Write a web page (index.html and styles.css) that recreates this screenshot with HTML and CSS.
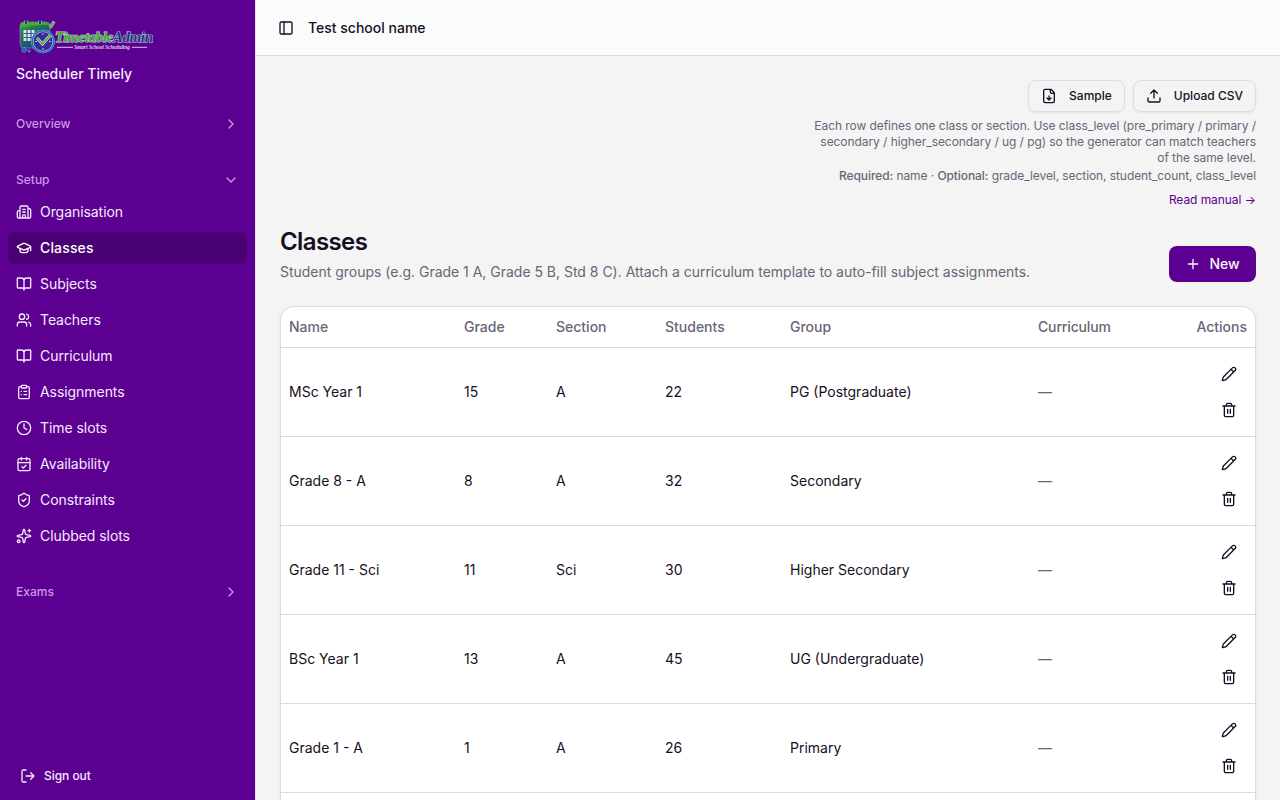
FILE: index.html
```html
<!DOCTYPE html>
<html lang="en">
  <head>
    <meta charset="UTF-8" />
    <title>Classes</title>
    <link rel="stylesheet" href="styles.css">
  </head>
  <body>
    <svg class="sprite">
      <symbol id="chevron-right" viewBox="0 0 24 24"><path d="m9 18 6-6-6-6" /></symbol>
      <symbol id="chevron-down" viewBox="0 0 24 24"><path d="m6 9 6 6 6-6" /></symbol>
      <symbol id="building" viewBox="0 0 24 24">
        <path d="M10 12h4M10 8h4M14 21v-3a2 2 0 0 0-4 0v3M6 10H4a2 2 0 0 0-2 2v7a2 2 0 0 0 2 2h16a2 2 0 0 0 2-2V9a2 2 0 0 0-2-2h-2M6 21V5a2 2 0 0 1 2-2h8a2 2 0 0 1 2 2v16" />
      </symbol>
      <symbol id="cap" viewBox="0 0 24 24">
        <path d="M21.42 10.922a1 1 0 0 0-.019-1.838L12.83 5.18a2 2 0 0 0-1.66 0L2.6 9.08a1 1 0 0 0 0 1.832l8.57 3.908a2 2 0 0 0 1.66 0zM22 10v6M6 12.5V16a6 3 0 0 0 12 0v-3.5" />
      </symbol>
      <symbol id="book" viewBox="0 0 24 24">
        <path d="M12 7v14M3 18a1 1 0 0 1-1-1V4a1 1 0 0 1 1-1h5a4 4 0 0 1 4 4 4 4 0 0 1 4-4h5a1 1 0 0 1 1 1v13a1 1 0 0 1-1 1h-6a3 3 0 0 0-3 3 3 3 0 0 0-3-3z" />
      </symbol>
      <symbol id="users" viewBox="0 0 24 24">
        <path d="M16 21v-2a4 4 0 0 0-4-4H6a4 4 0 0 0-4 4v2M16 3.128a4 4 0 0 1 0 7.744M22 21v-2a4 4 0 0 0-3-3.87" /><circle cx="9" cy="7" r="4" />
      </symbol>
      <symbol id="clipboard" viewBox="0 0 24 24">
        <rect width="8" height="4" x="8" y="2" rx="1" />
        <path d="M16 4h2a2 2 0 0 1 2 2v14a2 2 0 0 1-2 2H6a2 2 0 0 1-2-2V6a2 2 0 0 1 2-2h2M12 11h4M12 16h4M8 11h.01M8 16h.01" />
      </symbol>
      <symbol id="clock" viewBox="0 0 24 24"><circle cx="12" cy="12" r="10" /><path d="M12 6v6l4 2" /></symbol>
      <symbol id="calendar" viewBox="0 0 24 24">
        <rect width="18" height="18" x="3" y="4" rx="2" /><path d="M8 2v4M16 2v4M3 10h18M9 16l2 2 4-4" />
      </symbol>
      <symbol id="shield" viewBox="0 0 24 24">
        <path d="M20 13c0 5-3.5 7.5-7.66 8.95a1 1 0 0 1-.67-.01C7.5 20.5 4 18 4 13V6a1 1 0 0 1 1-1c2 0 4.5-1.2 6.24-2.72a1.17 1.17 0 0 1 1.52 0C14.51 3.81 17 5 19 5a1 1 0 0 1 1 1zM9 12l2 2 4-4" />
      </symbol>
      <symbol id="sparkles" viewBox="0 0 24 24">
        <path d="M11.017 2.814a1 1 0 0 1 1.966 0l1.051 5.558a2 2 0 0 0 1.594 1.594l5.558 1.051a1 1 0 0 1 0 1.966l-5.558 1.051a2 2 0 0 0-1.594 1.594l-1.051 5.558a1 1 0 0 1-1.966 0l-1.051-5.558a2 2 0 0 0-1.594-1.594l-5.558-1.051a1 1 0 0 1 0-1.966l5.558-1.051a2 2 0 0 0 1.594-1.594zM20 2v4M22 4h-4" /><circle cx="4" cy="20" r="2" />
      </symbol>
      <symbol id="logout" viewBox="0 0 24 24">
        <path d="m16 17 5-5-5-5M21 12H9M9 21H5a2 2 0 0 1-2-2V5a2 2 0 0 1 2-2h4" />
      </symbol>
      <symbol id="panel" viewBox="0 0 24 24"><rect width="18" height="18" x="3" y="3" rx="2" /><path d="M9 3v18" /></symbol>
      <symbol id="file-down" viewBox="0 0 24 24">
        <path d="M15 2H6a2 2 0 0 0-2 2v16a2 2 0 0 0 2 2h12a2 2 0 0 0 2-2V7zM14 2v4a2 2 0 0 0 2 2h4M12 18v-6M9 15l3 3 3-3" />
      </symbol>
      <symbol id="upload" viewBox="0 0 24 24">
        <path d="M12 3v12M17 8l-5-5-5 5M21 15v4a2 2 0 0 1-2 2H5a2 2 0 0 1-2-2v-4" />
      </symbol>
      <symbol id="plus" viewBox="0 0 24 24"><path d="M5 12h14M12 5v14" /></symbol>
      <symbol id="pencil" viewBox="0 0 24 24">
        <path d="M21.174 6.812a1 1 0 0 0-3.986-3.987L3.842 16.174a2 2 0 0 0-.5.83l-1.321 4.352a.5.5 0 0 0 .623.622l4.353-1.32a2 2 0 0 0 .83-.497zM15 5l4 4" />
      </symbol>
      <symbol id="trash" viewBox="0 0 24 24">
        <path d="M3 6h18M19 6v14a2 2 0 0 1-2 2H7a2 2 0 0 1-2-2V6M8 6V4a2 2 0 0 1 2-2h4a2 2 0 0 1 2 2v2M10 11v6M14 11v6" />
      </symbol>
    </svg>

    <div class="layout">
      <aside class="sidebar">
        <div class="brand">
          <svg class="logo" viewBox="0 0 140 40">
            <defs>
              <linearGradient id="cal" x1="0" y1="0" x2="0.6" y2="1">
                <stop offset="0" stop-color="#3fa535" />
                <stop offset="0.45" stop-color="#24705a" />
                <stop offset="1" stop-color="#18408c" />
              </linearGradient>
            </defs>
            <rect x="4" y="6" width="30" height="26" rx="4" fill="url(#cal)" stroke="#8fb5c8" stroke-width="0.5" />
            <path d="M4.5 11V9.5q0-3.500 3.500-3.500h18q4 0 7 2v1q-15-1-28.500 3z" fill="#49aa36" />
            <path d="M10 4v4M24 4v4" stroke="#9fc0cc" stroke-width="3" />
            <path d="M10 4v4M24 4v4" stroke="#173f78" stroke-width="2" />
            <rect x="7.5" y="14" width="11" height="11" fill="#dfe8ed" />
            <path d="M7.5 17.5h11M7.5 21.5h11M11 14v11M15 14v11" stroke="#2f5a8e" stroke-width="1.2" />
            <path d="M33 11l4-6 2 1.5-4 6" fill="#54ad48" stroke="#c9dcd9" stroke-width="0.7" />
            <circle cx="8" cy="34" r="2.4" fill="#245ca5" stroke="#8fb3dd" stroke-width="0.8" stroke-dasharray="1.5 1" />
            <circle cx="13" cy="35" r="1.5" fill="#378bb6" />
            <circle cx="27" cy="25.5" r="10.6" fill="#3d2a96" stroke="#a9cfe6" stroke-width="2.4" />
            <circle cx="27" cy="25.5" r="10.8" fill="none" stroke="#2b6cb3" stroke-width="1.5" />
            <path d="M27 17v2M27 32v2M19 25.5h2M33 25.5h2" stroke="#a8cce8" stroke-width="1" />
            <path d="M21 22l5.5 6 8-9" fill="none" stroke="#dcefe4" stroke-width="3" />
            <path d="M21 22l5.5 6 8-9" fill="none" stroke="#42a93d" stroke-width="1.8" />
            <text class="wordmark" x="39" y="26" textLength="98"><tspan fill="#43aa34">Timetable</tspan><tspan fill="#1b347f">Admin</tspan></text>
            <path d="M41 31.3h16M116 31.3h15" stroke="#e8ddf2" stroke-width="0.9" />
            <text class="tagline" x="58" y="33.2" textLength="56">Smart School Scheduling</text>
          </svg>
          <div class="brand-name">Scheduler Timely</div>
        </div>

        <nav class="nav">
          <div class="nav-group">
            <div class="nav-label">Overview <svg class="icon"><use href="#chevron-right" /></svg></div>
          </div>
          <div class="nav-group">
            <div class="nav-label">Setup <svg class="icon"><use href="#chevron-down" /></svg></div>
            <div class="nav-items">
              <a class="nav-item"><svg class="icon"><use href="#building" /></svg>Organisation</a>
              <a class="nav-item active"><svg class="icon"><use href="#cap" /></svg>Classes</a>
              <a class="nav-item"><svg class="icon"><use href="#book" /></svg>Subjects</a>
              <a class="nav-item"><svg class="icon"><use href="#users" /></svg>Teachers</a>
              <a class="nav-item"><svg class="icon"><use href="#book" /></svg>Curriculum</a>
              <a class="nav-item"><svg class="icon"><use href="#clipboard" /></svg>Assignments</a>
              <a class="nav-item"><svg class="icon"><use href="#clock" /></svg>Time slots</a>
              <a class="nav-item"><svg class="icon"><use href="#calendar" /></svg>Availability</a>
              <a class="nav-item"><svg class="icon"><use href="#shield" /></svg>Constraints</a>
              <a class="nav-item"><svg class="icon"><use href="#sparkles" /></svg>Clubbed slots</a>
            </div>
          </div>
          <div class="nav-group">
            <div class="nav-label">Exams <svg class="icon"><use href="#chevron-right" /></svg></div>
          </div>
        </nav>

        <a class="sign-out"><svg class="icon"><use href="#logout" /></svg>Sign out</a>
      </aside>

      <div class="page">
        <header class="topbar">
          <svg class="icon"><use href="#panel" /></svg>
          <span>Test school name</span>
        </header>

        <main class="content">
          <section class="import">
            <div class="import-buttons">
              <button class="btn-outline"><svg class="icon"><use href="#file-down" /></svg>Sample</button>
              <button class="btn-outline"><svg class="icon"><use href="#upload" /></svg>Upload CSV</button>
            </div>
            <p class="help">Each row defines one class or section. Use class_level (pre_primary / primary / secondary / higher_secondary / ug / pg) so the generator can match teachers of the same level.</p>
            <p class="fields"><b>Required:</b> name · <b>Optional:</b> grade_level, section, student_count, class_level</p>
            <a class="manual">Read manual →</a>
          </section>

          <div class="heading">
            <div>
              <h1>Classes</h1>
              <p>Student groups (e.g. Grade 1 A, Grade 5 B, Std 8 C). Attach a curriculum template to auto-fill subject assignments.</p>
            </div>
            <button class="btn-primary"><svg class="icon"><use href="#plus" /></svg>New</button>
          </div>

          <div class="card">
            <table>
              <thead>
                <tr>
                  <th class="col-name">Name</th>
                  <th class="col-grade">Grade</th>
                  <th class="col-section">Section</th>
                  <th class="col-students">Students</th>
                  <th class="col-group">Group</th>
                  <th class="col-curriculum">Curriculum</th>
                  <th class="col-actions">Actions</th>
                </tr>
              </thead>
              <tbody>
                <tr>
                  <td>MSc Year 1</td><td>15</td><td>A</td><td>22</td><td>PG (Postgraduate)</td><td class="muted">—</td>
                  <td><div class="actions"><button><svg class="icon"><use href="#pencil" /></svg></button><button><svg class="icon"><use href="#trash" /></svg></button></div></td>
                </tr>
                <tr>
                  <td>Grade 8 - A</td><td>8</td><td>A</td><td>32</td><td>Secondary</td><td class="muted">—</td>
                  <td><div class="actions"><button><svg class="icon"><use href="#pencil" /></svg></button><button><svg class="icon"><use href="#trash" /></svg></button></div></td>
                </tr>
                <tr>
                  <td>Grade 11 - Sci</td><td>11</td><td>Sci</td><td>30</td><td>Higher Secondary</td><td class="muted">—</td>
                  <td><div class="actions"><button><svg class="icon"><use href="#pencil" /></svg></button><button><svg class="icon"><use href="#trash" /></svg></button></div></td>
                </tr>
                <tr>
                  <td>BSc Year 1</td><td>13</td><td>A</td><td>45</td><td>UG (Undergraduate)</td><td class="muted">—</td>
                  <td><div class="actions"><button><svg class="icon"><use href="#pencil" /></svg></button><button><svg class="icon"><use href="#trash" /></svg></button></div></td>
                </tr>
                <tr>
                  <td>Grade 1 - A</td><td>1</td><td>A</td><td>26</td><td>Primary</td><td class="muted">—</td>
                  <td><div class="actions"><button><svg class="icon"><use href="#pencil" /></svg></button><button><svg class="icon"><use href="#trash" /></svg></button></div></td>
                </tr>
              </tbody>
            </table>
          </div>
        </main>
      </div>
    </div>
  </body>
</html>
```
FILE: styles.css
```css
* {
  box-sizing: border-box;
  margin: 0;
  padding: 0;
}

body {
  font-family: Inter, "Liberation Sans", sans-serif;
  font-size: 14px;
  line-height: 20px;
  color: #160f24;
  background: #f4f4f4;
}

button {
  font: inherit;
  color: inherit;
  border: 0;
  background: none;
}

.sprite {
  display: none;
}

.icon {
  width: 16px;
  height: 16px;
  flex-shrink: 0;
  fill: none;
  stroke: currentColor;
  stroke-width: 2;
  stroke-linecap: round;
  stroke-linejoin: round;
}

.layout {
  display: flex;
  height: 800px;
  overflow: hidden;
}

.sidebar {
  width: 256px;
  flex-shrink: 0;
  display: flex;
  flex-direction: column;
  color: #f7eafd;
  background: #5c0092;
  border-right: 1px solid #e4dfe8;
}

.brand {
  padding: 16px 16px 0;
}

.logo {
  display: block;
  width: 140px;
  height: 40px;
}

.wordmark {
  font: italic bold 15px "Liberation Serif", serif;
  stroke: #c3d6e0;
  stroke-width: 1px;
  paint-order: stroke;
}

.tagline {
  font: italic bold 5.5px "Liberation Serif", serif;
  fill: #d9cbe8;
}

.brand-name {
  margin-top: 8px;
  font-weight: 500;
  letter-spacing: -0.04px;
}

.nav {
  flex: 1;
  display: flex;
  flex-direction: column;
  gap: 24px;
  padding: 24px 8px 0;
}

.nav-label {
  display: flex;
  align-items: center;
  justify-content: space-between;
  height: 32px;
  padding: 0 8px;
  font-size: 12px;
  font-weight: 500;
  color: #c99ae6;
}

.nav-items {
  display: flex;
  flex-direction: column;
  gap: 4px;
}

.nav-item {
  display: flex;
  align-items: center;
  gap: 8px;
  height: 32px;
  padding: 0 8px;
  border-radius: 8px;
  letter-spacing: -0.06px;
}

.nav-item.active {
  font-weight: 500;
  letter-spacing: 0.15px;
  color: #fff;
  background: #480073;
}

.sign-out {
  display: flex;
  align-items: center;
  gap: 8px;
  height: 32px;
  margin: 0 8px 8px;
  padding: 0 12px;
  font-size: 12px;
  font-weight: 500;
  letter-spacing: -0.05px;
}

.page {
  flex: 1;
  min-width: 0;
}

.topbar {
  display: flex;
  align-items: center;
  gap: 14px;
  height: 56px;
  padding-left: 22px;
  font-weight: 500;
  background: #f9fcfb;
  border-bottom: 1px solid #dcdcdf;
}

.content {
  padding: 24px;
}

.import {
  display: flex;
  flex-direction: column;
  align-items: flex-end;
  font-size: 12px;
  line-height: 16px;
  text-align: right;
  color: #6b6477;
}

.import-buttons {
  display: flex;
  gap: 8px;
}

.btn-outline {
  display: flex;
  align-items: center;
  gap: 12px;
  height: 32px;
  padding: 0 12px;
  font-weight: 500;
  color: #160f24;
  border: 1px solid #dedee1;
  border-radius: 8px;
  box-shadow: 0 1px 2px rgba(0, 0, 0, 0.08);
}

.help {
  width: 448px;
  margin-top: 6px;
  letter-spacing: -0.065px;
}

.fields {
  margin-top: 2px;
  letter-spacing: -0.08px;
}

.fields b {
  font-weight: 500;
}

.manual {
  margin-top: 8px;
  letter-spacing: -0.07px;
  color: #5c0092;
}

.heading {
  display: flex;
  align-items: flex-end;
  justify-content: space-between;
  margin: 18px 0 24px;
}

.heading h1 {
  font-size: 24px;
  line-height: 32px;
  font-weight: 600;
  letter-spacing: -0.6px;
}

.heading p {
  margin-top: 4px;
  letter-spacing: -0.015px;
  color: #6b6477;
}

.btn-primary {
  display: flex;
  align-items: center;
  justify-content: center;
  gap: 8px;
  width: 87px;
  height: 36px;
  font-weight: 500;
  color: #fbf5ff;
  background: #5c0092;
  border-radius: 8px;
}

.card {
  height: 600px;
  background: #fff;
  border: 1px solid #dcdcdf;
  border-radius: 14px;
  box-shadow: 0 1px 3px rgba(0, 0, 0, 0.1);
  overflow: hidden;
}

table {
  width: 100%;
  table-layout: fixed;
  border-spacing: 0;
}

th,
td {
  padding: 8px;
  text-align: left;
  border-bottom: 1px solid #dcdcdf;
}

th {
  height: 41px;
  padding: 0 8px;
  font-weight: 500;
  color: #6b6477;
}

.col-name {
  width: 175px;
}

.col-grade {
  width: 92px;
}

.col-section {
  width: 109px;
}

.col-students {
  width: 125px;
}

.col-group {
  width: 248px;
}

.col-curriculum {
  width: 150px;
  letter-spacing: -0.15px;
}

.col-actions {
  text-align: right;
}

.muted {
  color: #6b6477;
}

.actions {
  display: flex;
  flex-direction: column;
  align-items: flex-end;
}

.actions button {
  display: flex;
  align-items: center;
  justify-content: center;
  width: 36px;
  height: 36px;
}
```
